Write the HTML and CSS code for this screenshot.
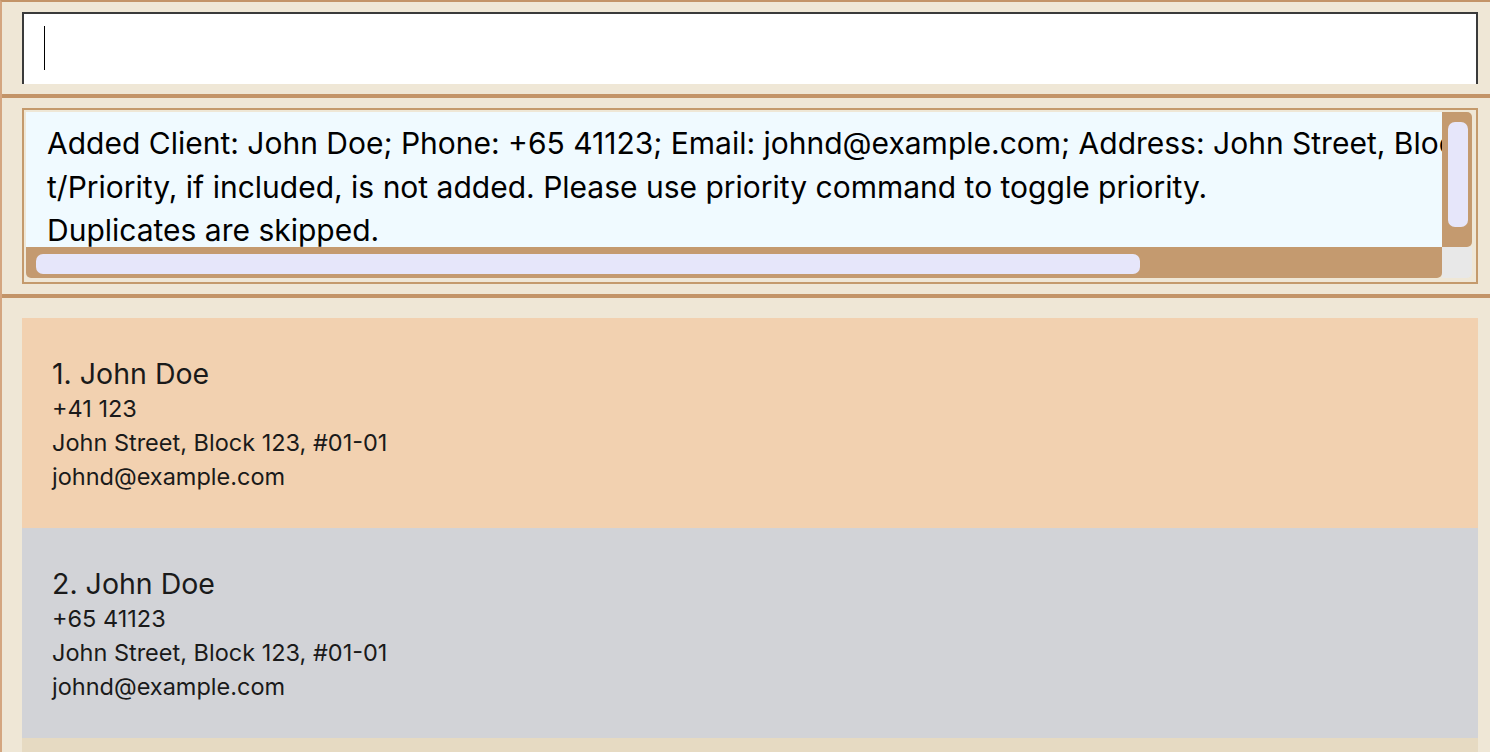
FILE: index.html
```html
<!DOCTYPE html>
<html>
<head>
<meta charset="utf-8">
<link rel="stylesheet" href="styles.css">
</head>
<body>
<div class="app">
  <div class="command-pane">
    <div class="command-box"><span class="caret"></span></div>
  </div>
  <div class="separator"></div>
  <div class="result-pane">
    <div class="result-box">
      <div class="scroll-grid">
        <div class="result-text">
          <div class="line">Added Client: John Doe; Phone: +65 41123; Email: johnd@example.com; Address: John Street, Block 123, #01-01</div>
          <div class="line">t/Priority, if included, is not added. Please use priority command to toggle priority.</div>
          <div class="line">Duplicates are skipped.</div>
        </div>
        <div class="vbar"><div class="vthumb"></div></div>
        <div class="hbar"><div class="hthumb"></div></div>
        <div class="corner"></div>
      </div>
    </div>
  </div>
  <div class="separator"></div>
  <div class="list-pane">
    <div class="list">
      <div class="card card-priority">
        <div class="name">1. John Doe</div>
        <div class="field">+41 123</div>
        <div class="field">John Street, Block 123, #01-01</div>
        <div class="field">johnd@example.com</div>
      </div>
      <div class="card card-normal">
        <div class="name">2. John Doe</div>
        <div class="field">+65 41123</div>
        <div class="field">John Street, Block 123, #01-01</div>
        <div class="field">johnd@example.com</div>
      </div>
    </div>
  </div>
</div>
</body>
</html>
```
FILE: styles.css
```css
html, body {
  margin: 0;
  padding: 0;
  height: 100%;
  overflow: hidden;
}
body {
  background: #efe7d6;
  font-family: Inter, "Noto Sans", sans-serif;
}
.app {
  height: 100%;
  box-sizing: border-box;
  border-top: 2px solid #c39468;
  border-left: 2px solid #d4a680;
  display: flex;
  flex-direction: column;
}
.command-pane {
  padding: 10px 12px 10px 20px;
}
.command-box {
  box-sizing: border-box;
  background: #ffffff;
  border: 2px solid #3a3a3a;
  border-bottom: none;
  height: 72px;
  padding: 12px 0 0 20px;
}
.caret {
  display: block;
  width: 1px;
  height: 44px;
  background: #000;
}
.separator {
  height: 4px;
  background: #c39468;
  flex: none;
}
.result-pane {
  padding: 10px 12px 10px 20px;
}
.result-box {
  border: 2px solid #c49a6c;
  padding: 2px 4px 4px 2px;
}
.scroll-grid {
  display: grid;
  grid-template-columns: 1fr 30px;
  grid-template-rows: 135px 31px;
}
.result-text {
  background: #f0faff;
  overflow: hidden;
  padding: 10px 0 0 21px;
  font-size: 30px;
  line-height: 43.5px;
  color: #000;
  white-space: nowrap;
}
.vbar {
  background: #c49a6f;
  border-radius: 0 5px 5px 0;
  padding: 10px 4px 0 6px;
}
.vthumb {
  height: 105px;
  background: #e6e6fa;
  border-radius: 7px;
}
.hbar {
  background: #c49a6f;
  border-radius: 0 0 5px 5px;
  padding: 7px 0 0 10px;
}
.hthumb {
  width: 1104px;
  height: 20px;
  background: #e6e6fa;
  border-radius: 7px;
}
.corner {
  background: #e8e8e8;
  border-radius: 0 0 5px 0;
}
.list-pane {
  flex: 1;
  padding: 20px 12px 0 20px;
  display: flex;
}
.list {
  flex: 1;
  background: #e6dac2;
}
.card {
  height: 210px;
  box-sizing: border-box;
  padding: 38px 0 0 30px;
  color: #1a1a1a;
}
.card-priority {
  background: #f2d1b0;
}
.card-normal {
  background: #d2d3d7;
}
.name {
  font-size: 28.5px;
  line-height: 36px;
}
.field {
  font-size: 23.5px;
  line-height: 34px;
}
```
